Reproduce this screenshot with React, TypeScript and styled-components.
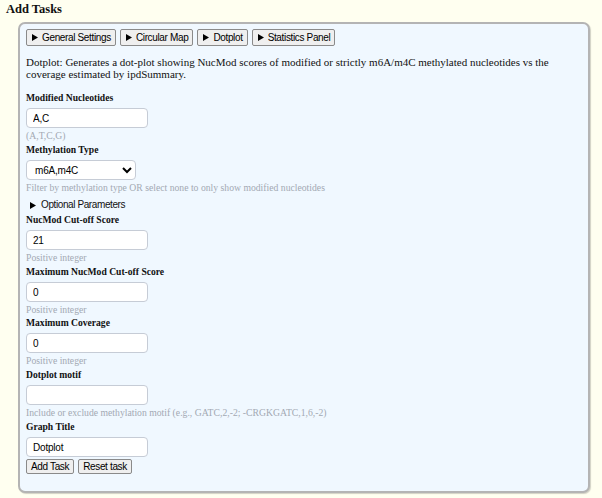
import React from "react";
import styled, { createGlobalStyle } from "styled-components";

const Global = createGlobalStyle`
  html, body { margin: 0; padding: 0; background: #fffff0; }
  body { font-family: "Liberation Serif", "Times New Roman", serif; color: #111; }
  * { box-sizing: border-box; }
`;

const Page = styled.div`
  padding: 2px 12px 5px 6px;
  display: flex;
  flex-direction: column;
`;

const Title = styled.h3`
  margin: 0 0 6px 0;
  font-size: 12.5px;
  line-height: 14px;
  font-weight: bold;
`;

const Panel = styled.div`
  margin-left: 12px;
  width: 572px;
  height: 471px;
  background: #f0f8ff;
  border: 2px solid #b4b4b4;
  border-radius: 7px;
  box-shadow: 1px 1px 1px rgba(0, 0, 0, 0.18);
  padding: 5px 6px;
  display: flex;
  flex-direction: column;
`;

const TabRow = styled.div`
  display: flex;
  gap: 4px;
`;

const NativeButton = styled.button`
  font-family: "Liberation Sans", Arial, sans-serif;
  font-size: 10px;
  letter-spacing: -0.35px;
  line-height: 12px;
  color: #000;
  background: #efefef;
  border: 1px solid #8a8a8a;
  border-radius: 2px;
  padding: 0 4px 0 5px;
  height: 17px;
  display: inline-flex;
  align-items: center;
  gap: 4px;
`;

const TriangleSvg = styled.svg`
  width: 6px;
  height: 7px;
  flex: none;
`;

const Triangle = () => (
  <TriangleSvg viewBox="0 0 6 7">
    <polygon points="0,0 6,3.5 0,7" fill="#000" />
  </TriangleSvg>
);

const Description = styled.p`
  margin: 10px 0 12px 0;
  font-size: 11px;
  line-height: 12px;
`;

const Label = styled.div<{ $gap?: number }>`
  font-weight: bold;
  font-size: 9.6px;
  line-height: 12px;
  margin-top: ${(p) => (p.$gap ?? 2)}px;
`;

const TextInput = styled.input`
  display: block;
  width: 122px;
  height: 20px;
  margin: 4px 0 0 0;
  padding: 0 6px;
  font-family: "Liberation Sans", Arial, sans-serif;
  font-size: 10px;
  letter-spacing: -0.2px;
  color: #000;
  background: #fff;
  border: 1px solid #c6ccd6;
  border-radius: 4px;
`;

const SelectBox = styled.select`
  display: block;
  width: 110px;
  height: 20px;
  margin: 4px 0 0 0;
  padding: 0 4px;
  font-family: "Liberation Sans", Arial, sans-serif;
  font-size: 10px;
  letter-spacing: -0.2px;
  color: #000;
  background: #fff;
  border: 1px solid #c6ccd6;
  border-radius: 4px;
`;

const Hint = styled.div`
  margin-top: 2px;
  font-size: 9.7px;
  line-height: 12px;
  color: #a3a9b3;
`;

const Summary = styled.div`
  font-family: "Liberation Sans", Arial, sans-serif;
  font-size: 10px;
  letter-spacing: -0.4px;
  line-height: 12px;
  margin: 5px 0 0 4px;
  display: flex;
  gap: 5px;
  align-items: center;
`;

const ActionRow = styled.div`
  display: flex;
  gap: 4px;
  margin-top: 2px;
`;

const ActionButton = styled(NativeButton)`
  height: 15px;
  padding: 0 4px;
`;

type FieldProps = { label: string; value: string; hint: string; gap?: number };

const Field = ({ label, value, hint, gap }: FieldProps) => (
  <>
    <Label $gap={gap}>{label}</Label>
    <TextInput defaultValue={value} />
    <Hint>{hint}</Hint>
  </>
);

export default function App() {
  return (
    <>
      <Global />
      <Page>
        <Title>Add Tasks</Title>
        <Panel>
          <TabRow>
            {["General Settings", "Circular Map", "Dotplot", "Statistics Panel"].map((t) => (
              <NativeButton key={t}>
                <Triangle />
                {t}
              </NativeButton>
            ))}
          </TabRow>
          <Description>
            Dotplot: Generates a dot-plot showing NucMod scores of modified or strictly m6A/m4C methylated nucleotides vs the
            coverage estimated by ipdSummary.
          </Description>
          <Field label="Modified Nucleotides" value="A,C" hint="(A,T,C,G)" gap={0} />
          <Label>Methylation Type</Label>
          <SelectBox defaultValue="m6A,m4C">
            <option>m6A,m4C</option>
            <option>m6A</option>
            <option>m4C</option>
          </SelectBox>
          <Hint>Filter by methylation type OR select none to only show modified nucleotides</Hint>
          <Summary>
            <Triangle />
            Optional Parameters
          </Summary>
          <Field label="NucMod Cut-off Score" value="21" hint="Positive integer" gap={3} />
          <Field label="Maximum NucMod Cut-off Score" value="0" hint="Positive integer" />
          <Field label="Maximum Coverage" value="0" hint="Positive integer" gap={1} />
          <Field
            label="Dotplot motif"
            value=""
            hint="Include or exclude methylation motif (e.g., GATC,2,-2; -CRGKGATC,1,6,-2)"
          />
          <Label>Graph Title</Label>
          <TextInput defaultValue="Dotplot" />
          <ActionRow>
            <ActionButton>Add Task</ActionButton>
            <ActionButton>Reset task</ActionButton>
          </ActionRow>
        </Panel>
      </Page>
    </>
  );
}
